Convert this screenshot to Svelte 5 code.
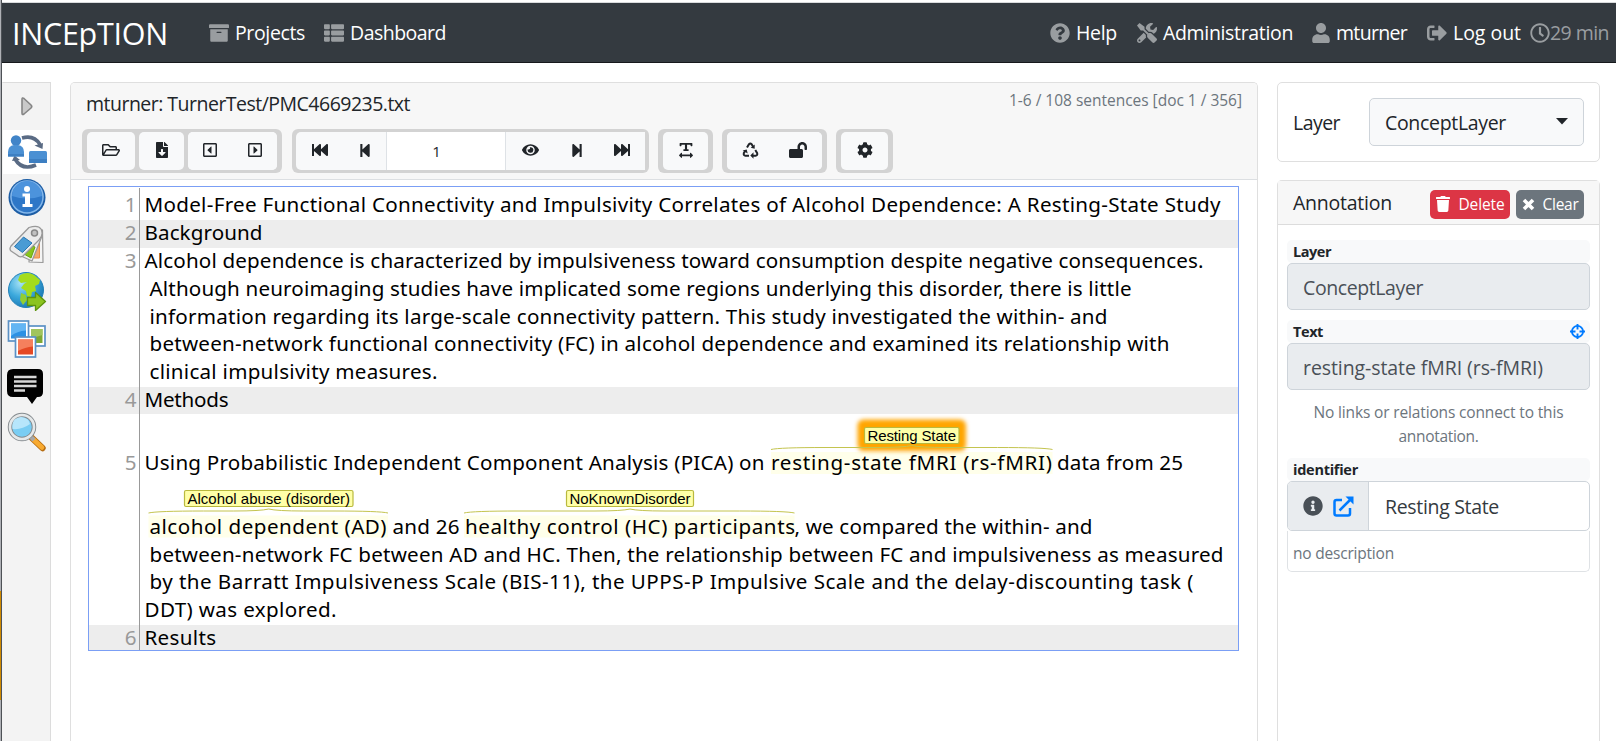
<script>
  const glyphs = {
    archive: { box: '0 0 512 512', d: 'M32 448c0 17.7 14.3 32 32 32h384c17.7 0 32-14.3 32-32V160H32v288zm160-212c0-6.600 5.400-12 12-12h104c6.600 0 12 5.400 12 12v8c0 6.600-5.400 12-12 12H204c-6.600 0-12-5.400-12-12v-8zM480 32H32C14.300 32 0 46.300 0 64v48c0 8.800 7.200 16 16 16h480c8.800 0 16-7.200 16-16V64c0-17.700-14.300-32-32-32z' },
    list: { box: '0 0 512 512', d: 'M149.333 216v80c0 13.255-10.745 24-24 24H24c-13.255 0-24-10.745-24-24v-80c0-13.255 10.745-24 24-24h101.333c13.255 0 24 10.745 24 24zM0 376v80c0 13.255 10.745 24 24 24h101.333c13.255 0 24-10.745 24-24v-80c0-13.255-10.745-24-24-24H24c-13.255 0-24 10.745-24 24zM125.333 32H24C10.745 32 0 42.745 0 56v80c0 13.255 10.745 24 24 24h101.333c13.255 0 24-10.745 24-24V56c0-13.255-10.745-24-24-24zm80 448H488c13.255 0 24-10.745 24-24v-80c0-13.255-10.745-24-24-24H205.333c-13.255 0-24 10.745-24 24v80c0 13.255 10.745 24 24 24zm-24-424v80c0 13.255 10.745 24 24 24H488c13.255 0 24-10.745 24-24V56c0-13.255-10.745-24-24-24H205.333c-13.255 0-24 10.745-24 24zm24 264H488c13.255 0 24-10.745 24-24v-80c0-13.255-10.745-24-24-24H205.333c-13.255 0-24 10.745-24 24v80c0 13.255 10.745 24 24 24z' },
    help: { box: '0 0 512 512', d: 'M504 256c0 136.997-111.043 248-248 248S8 392.997 8 256C8 119.083 119.043 8 256 8s248 111.083 248 248zM262.655 90c-54.497 0-89.255 22.957-116.549 63.758-3.536 5.286-2.353 12.415 2.715 16.258l34.699 26.310c5.205 3.947 12.621 3.008 16.665-2.122 17.864-22.658 30.113-35.797 57.303-35.797 20.429 0 45.698 13.148 45.698 32.958 0 14.976-12.363 22.667-32.534 33.976C247.128 238.528 216 254.941 216 296v4c0 6.627 5.373 12 12 12h56c6.627 0 12-5.373 12-12v-1.333c0-28.462 83.186-29.647 83.186-106.667 0-58.002-60.165-102-116.531-102zM256 338c-25.365 0-46 20.635-46 46 0 25.364 20.635 46 46 46s46-20.636 46-46c0-25.365-20.635-46-46-46z' },
    tools: { box: '0 0 512 512', d: 'M501.1 395.7L384 278.6c-23.1-23.1-57.6-27.6-85.4-13.9L192 158.1V96L64 0 0 64l96 128h62.1l106.6 106.6c-13.6 27.8-9.2 62.3 13.9 85.4l117.1 117.1c14.6 14.6 38.2 14.6 52.7 0l52.7-52.7c14.5-14.6 14.5-38.2 0-52.7zM331.700 225c28.3 0 54.9 11 74.9 31l19.4 19.400c15.8-6.900 30.8-16.500 43.8-29.500 37.100-37.100 49.700-89.300 37.900-136.700-2.200-9-13.500-12.100-20.100-5.500l-74.400 74.400-67.900-11.300L334 98.900l74.400-74.400c6.600-6.600 3.400-17.900-5.700-20.200-47.400-11.700-99.600.9-136.600 37.900-28.500 28.500-41.900 66.100-41.200 103.600l82.100 82.100c8.100-1.900 16.500-2.900 24.700-2.900zm-103.900 82l-56.700-56.700L18.700 402.800c-25 25-25 65.500 0 90.500s65.500 25 90.500 0l123.600-123.600c-7.600-19.900-9.900-41.600-5-62.700zM64 472c-13.200 0-24-10.800-24-24 0-13.300 10.700-24 24-24s24 10.700 24 24c0 13.200-10.700 24-24 24z' },
    user: { box: '0 0 448 512', d: 'M224 256c70.700 0 128-57.300 128-128S294.700 0 224 0 96 57.300 96 128s57.300 128 128 128zm89.600 32h-16.700c-22.200 10.200-46.900 16-72.900 16s-50.600-5.800-72.900-16h-16.700C60.200 288 0 348.200 0 422.400V464c0 26.500 21.500 48 48 48h352c26.500 0 48-21.500 48-48v-41.600c0-74.200-60.200-134.400-134.400-134.400z' },
    logout: { box: '0 0 512 512', d: 'M497 273L329 441c-15 15-41 4.500-41-17v-96H152c-13.300 0-24-10.700-24-24v-96c0-13.300 10.700-24 24-24h136V88c0-21.400 25.900-32 41-17l168 168c9.300 9.400 9.300 24.600 0 34zM192 436v-40c0-6.600-5.400-12-12-12H96c-17.700 0-32-14.300-32-32V160c0-17.700 14.300-32 32-32h84c6.600 0 12-5.400 12-12V76c0-6.600-5.400-12-12-12H96c-53 0-96 43-96 96v192c0 53 43 96 96 96h84c6.600 0 12-5.400 12-12z' },
    clock: { box: '0 0 512 512', d: 'M256 8C119 8 8 119 8 256s111 248 248 248 248-111 248-248S393 8 256 8zm0 448c-110.500 0-200-89.500-200-200S145.500 56 256 56s200 89.500 200 200-89.500 200-200 200zm61.800-104.400l-84.900-61.700c-3.100-2.300-4.900-5.900-4.900-9.700V116c0-6.600 5.400-12 12-12h32c6.600 0 12 5.400 12 12v141.700l66.800 48.600c5.400 3.900 6.500 11.400 2.600 16.800L334.600 349c-3.900 5.300-11.400 6.500-16.800 2.600z' },
    folder: { box: '0 0 576 512', d: 'M527.9 224H480v-48c0-26.500-21.500-48-48-48H272l-64-64H48C21.500 64 0 85.500 0 112v288c0 26.500 21.500 48 48 48h400c16.500 0 31.900-8.500 40.700-22.600l79.900-128c20-31.900-3-73.400-40.700-73.400zM48 118c0-3.300 2.700-6 6-6h134.100l64 64H426c3.300 0 6 2.700 6 6v42H152c-16.800 0-32.400 8.800-41.100 23.200L48 351.400zm400 282H72l77.200-128H528z' },
    file: { box: '0 0 384 512', d: 'M224 136V0H24C10.700 0 0 10.700 0 24v464c0 13.300 10.700 24 24 24h336c13.300 0 24-10.700 24-24V160H248c-13.200 0-24-10.800-24-24zm76.450 211.360l-96.420 95.700c-6.650 6.610-17.390 6.610-24.040 0l-96.420-95.700C73.420 337.290 80.540 320 94.820 320H160v-80c0-8.840 7.160-16 16-16h32c8.840 0 16 7.160 16 16v80h65.180c14.280 0 21.400 17.290 11.270 27.360zM377 105L279.100 7c-4.500-4.500-10.600-7-17-7H256v128h128v-6.100c0-6.300-2.500-12.400-7-16.900z' },
    caretLeft: { box: '0 0 448 512', d: 'M400 32H48C21.500 32 0 53.500 0 80v352c0 26.500 21.500 48 48 48h352c26.500 0 48-21.500 48-48V80c0-26.500-21.500-48-48-48zM400 432H48V80h352zM272 150v212c0 8-9 12-15 7L148 268c-7-7-7-17 0-24l109-101c6-5 15-1 15 7z' },
    caretRight: { box: '0 0 448 512', d: 'M400 32H48C21.500 32 0 53.500 0 80v352c0 26.500 21.500 48 48 48h352c26.500 0 48-21.500 48-48V80c0-26.500-21.500-48-48-48zM400 432H48V80h352zM176 150v212c0 8 9 12 15 7l109-101c7-7 7-17 0-24L191 143c-6-5-15-1-15 7z' },
    first: { box: '0 0 512 512', d: 'M0 436V76c0-7 5-12 12-12h40c7 0 12 5 12 12v152L236 72c20-17 52-3 52 24v132L460 72c20-17 52-3 52 24v320c0 27-32 41-52 25L288 285v131c0 27-32 41-52 25L64 285v151c0 7-5 12-12 12H12c-7 0-12-5-12-12z' },
    prev: { box: '0 0 448 512', d: 'M64 468V44c0-7 5-12 12-12h48c7 0 12 5 12 12v176L331 40c20-17 53-2 53 25v382c0 27-33 41-53 24L136 292v176c0 7-5 12-12 12H76c-7 0-12-5-12-12z' },
    eye: { box: '0 0 576 512', d: 'M572.520 241.400C518.290 135.590 410.930 64 288 64S57.680 135.640 3.480 241.410a32.350 32.350 0 0 0 0 29.190C57.710 376.410 165.070 448 288 448s230.320-71.640 284.520-177.410a32.350 32.350 0 0 0 0-29.190zM288 400a144 144 0 1 1 144-144 143.930 143.930 0 0 1-144 144zm0-240a95.310 95.310 0 0 0-25.310 3.790 47.850 47.850 0 0 1-66.900 66.900A95.780 95.780 0 1 0 288 160z' },
    width: { box: '0 0 448 512', d: 'M36 30h376c9 0 16 7 16 16v72c0 9-7 16-16 16h-26c-9 0-16-7-16-16V86H258v142h36c9 0 16 7 16 16v24c0 9-7 16-16 16H154c-9 0-16-7-16-16v-24c0-9 7-16 16-16h36V86H78v32c0 9-7 16-16 16H36c-9 0-16-7-16-16V46c0-9 7-16 16-16zM96 356v44h256v-44c0-14 14-20 24-12l66 70c8 8 8 16 0 24l-66 68c-10 8-24 2-24-12v-40H96v40c0 14-14 20-24 12L6 438c-8-8-8-16 0-24l66-70c10-8 24-2 24 12z' },
    unlock: { box: '0 0 576 512', d: 'M423.500 0C339.500.3 272 69.500 272 153.500V224H48c-26.500 0-48 21.500-48 48v192c0 26.500 21.500 48 48 48h352c26.500 0 48-21.500 48-48V272c0-26.500-21.500-48-48-48h-48v-71.100c0-39.600 31.700-72.500 71.300-72.900 40-.4 72.700 32.100 72.700 72v80c0 13.300 10.700 24 24 24h32c13.300 0 24-10.700 24-24v-80C576 68 507.500-.3 423.500 0z' },
    cog: { box: '0 0 512 512', d: 'M487.400 315.700l-42.600-24.600c4.300-23.200 4.300-47 0-70.200l42.600-24.600c4.900-2.800 7.100-8.600 5.500-14-11.100-35.600-30-67.800-54.700-94.600-3.800-4.100-10-5.100-14.800-2.300L380.800 110c-17.900-15.400-38.500-27.300-60.800-35.100V25.800c0-5.600-3.900-10.500-9.400-11.700-36.700-8.200-74.300-7.800-109.200 0-5.500 1.200-9.400 6.100-9.400 11.700V75c-22.200 7.900-42.800 19.800-60.800 35.100L88.700 85.500c-4.900-2.800-11-1.900-14.800 2.300-24.700 26.700-43.600 58.900-54.700 94.600-1.700 5.400.6 11.200 5.500 14L67.300 221c-4.300 23.200-4.300 47 0 70.200l-42.600 24.600c-4.900 2.800-7.100 8.600-5.500 14 11.100 35.600 30 67.800 54.700 94.600 3.800 4.100 10 5.100 14.800 2.300l42.600-24.600c17.900 15.400 38.500 27.300 60.800 35.100v49.200c0 5.600 3.900 10.500 9.400 11.700 36.700 8.200 74.300 7.800 109.200 0 5.500-1.200 9.400-6.100 9.400-11.700v-49.200c22.200-7.900 42.800-19.800 60.800-35.100l42.600 24.600c4.900 2.800 11 1.900 14.800-2.300 24.700-26.700 43.600-58.900 54.700-94.600 1.500-5.500-.7-11.300-5.600-14.100zM256 336c-44.100 0-80-35.900-80-80s35.900-80 80-80 80 35.900 80 80-35.900 80-80 80z' },
    trash: { box: '0 0 448 512', d: 'M432 32H312l-9.400-18.700A24 24 0 0 0 281.100 0H166.800a23.720 23.720 0 0 0-21.400 13.300L136 32H16A16 16 0 0 0 0 48v32a16 16 0 0 0 16 16h416a16 16 0 0 0 16-16V48a16 16 0 0 0-16-16zM53.200 467a48 48 0 0 0 47.900 45h245.800a48 48 0 0 0 47.900-45L416 128H32z' },
    info: { box: '0 0 512 512', d: 'M256 8C119.043 8 8 119.083 8 256c0 136.997 111.043 248 248 248s248-111.003 248-248C504 119.083 392.957 8 256 8zm0 110c23.196 0 42 18.804 42 42s-18.804 42-42 42-42-18.804-42-42 18.804-42 42-42zm56 254c0 6.627-5.373 12-12 12h-88c-6.627 0-12-5.373-12-12v-24c0-6.627 5.373-12 12-12h12v-64h-12c-6.627 0-12-5.373-12-12v-24c0-6.627 5.373-12 12-12h64c6.627 0 12 5.373 12 12v100h12c6.627 0 12 5.373 12 12v24z' }
  };

  // Spreads a label over its nominal width by adjusting the tracking.
  function fit(node, width) {
    const spacing = (width - node.getBoundingClientRect().width) / node.textContent.length;
    node.style.letterSpacing = `${spacing.toFixed(3)}px`;
  }

  const rows = [
    { y: 187, h: 33 }, { y: 220, h: 28, shade: true }, { y: 387, h: 27, shade: true }, { y: 625, h: 25, shade: true }
  ];
  const numbers = [['1', 212], ['2', 240], ['3', 268], ['4', 407], ['5', 470], ['6', 645]];
  const chunks = [
    [144.500, 212, 1076, 'Model-Free Functional Connectivity and Impulsivity Correlates of Alcohol Dependence: A Resting-State Study'],
    [144.500, 240, 118, 'Background'],
    [144.500, 268, 1059, 'Alcohol dependence is characterized by impulsiveness toward consumption despite negative consequences.'],
    [149.500, 296, 982, 'Although neuroimaging studies have implicated some regions underlying this disorder, there is little'],
    [149.500, 323.500, 958, 'information regarding its large-scale connectivity pattern. This study investigated the within- and'],
    [149.500, 351, 1020, 'between-network functional connectivity (FC) in alcohol dependence and examined its relationship with'],
    [149.500, 379, 288, 'clinical impulsivity measures.'],
    [144.500, 407, 84, 'Methods'],
    [144.500, 470, 620, 'Using Probabilistic Independent Component Analysis (PICA) on'],
    [771, 470, 281, 'resting-state fMRI (rs-fMRI)'],
    [1057, 470, 126, 'data from 25'],
    [149.500, 534, 237, 'alcohol dependent (AD)'],
    [392.500, 534, 67, 'and 26'],
    [465, 534, 330, 'healthy control (HC) participants'],
    [794.500, 534, 298, ', we compared the within- and'],
    [149.500, 562, 1074, 'between-network FC between AD and HC. Then, the relationship between FC and impulsiveness as measured'],
    [149.500, 589, 1044, 'by the Barratt Impulsiveness Scale (BIS-11), the UPPS-P Impulsive Scale and the delay-discounting task ('],
    [144.500, 617, 192, 'DDT) was explored.'],
    [144.500, 645, 71.500, 'Results']
  ];
  const spans = [
    { x: 771, w: 281.500, top: 452, lx: 864.500, lw: 94.500, ly: 427.500, label: 'Resting State', focus: true },
    { x: 148.500, w: 239.500, top: 515.500, lx: 184.500, lw: 168.500, ly: 490.500, label: 'Alcohol abuse (disorder)' },
    { x: 464, w: 330.500, top: 515.500, lx: 566.500, lw: 127, ly: 490.500, label: 'NoKnownDisorder' }
  ];
  function brace(s) {
    const y = s.top - 3.500, m = s.lx + s.lw / 2, r = s.x + s.w;
    return `M${s.x} ${y + 1} Q${s.x + 8} ${y - 1} ${s.x + 55} ${y - 1} H${m - 35} Q${m - 8} ${y - 1} ${m} ${y - 3} Q${m + 8} ${y - 1} ${m + 35} ${y - 1} H${r - 55} Q${r - 8} ${y - 1} ${r} ${y + 1}`;
  }
</script>

{#snippet icon(name, w, h, flip = false)}
  <svg class="glyph" class:flip width={w} height={h} viewBox={glyphs[name].box}><path fill-rule="evenodd" d={glyphs[name].d} /></svg>
{/snippet}

<div class="page">
  <div class="edge"><i></i></div>
  <div class="app">
    <nav>
      <span class="brand" use:fit={156}>INCEpTION</span>
      <a class="projects">{@render icon('archive', 20, 20)}<span use:fit={70}>Projects</span></a>
      <a class="dash">{@render icon('list', 20, 20)}<span use:fit={96}>Dashboard</span></a>
      <div class="right">
        <a class="n1">{@render icon('help', 20, 20)}<span use:fit={41}>Help</span></a>
        <a class="n2">{@render icon('tools', 20, 20)}<span use:fit={130}>Administration</span></a>
        <a class="n3">{@render icon('user', 18, 20)}<span use:fit={71}>mturner</span></a>
        <a class="n4">{@render icon('logout', 20, 20)}<span use:fit={68}>Log out</span></a>
        <a class="n5">{@render icon('clock', 20, 20)}<span use:fit={59}>29 min</span></a>
      </div>
    </nav>

    <div class="body">
      <aside>
        <div class="tab arrow">
          <svg width="14" height="21" viewBox="0 0 14 21"><path d="M2 3.500Q2 1 4 2.500L11 9Q12.500 10.500 11 12L4 18Q2 19.500 2 17z" fill="#c9c9c9" stroke="#858585" stroke-width="1.600" /></svg>
        </div>
        <div class="tab active">
          <svg width="40" height="36" viewBox="0 0 40 36">
            <g fill="none" stroke="#5a6b84" stroke-width="3.600"><path d="M15 4Q27 .5 33 10.500" /><path d="M29 31Q15 37 8 25" /></g>
            <path d="M27.500 11.500l8.500-2.500-.500 6zM5 27l2.500-5.500 5.500 4.500z" fill="#5a6b84" />
            <circle cx="9" cy="6.500" r="5.200" fill="#4184c8" />
            <path d="M1 22.500V18Q1 12 7 11h4q6 1 6 7v4.500z" fill="#4b90d3" /><rect x="22" y="17" width="18" height="12" rx="1.500" fill="#4b90d3" />
            <path d="M1 20h16v2.500H1zM22 25h18v4H22z" fill="#3d7fc2" />
          </svg>
        </div>
        <div class="tab">
          <svg class="up2" width="40" height="40" viewBox="0 0 40 40">
            <circle cx="20" cy="20.500" r="18.500" fill="#1c5da5" /><circle cx="20" cy="20" r="16.800" fill="#85b8eb" /><circle cx="20" cy="20" r="15.300" fill="#2e77c7" /><path d="M5 19a15 15 0 0 1 30 0Q20 24 5 19z" fill="#4c93dc" />
            <circle cx="20" cy="12" r="3" fill="#fff" /><path d="M15.500 16.500H23V27h2.500v3h-10v-3H18v-7.500h-2.500z" fill="#fff" />
          </svg>
        </div>
        <div class="tab">
          <svg class="up1" width="40" height="40" viewBox="0 0 40 40" stroke-linejoin="round">
            <path d="M24 4l11.500 1 .500 32.500-14-.500z" fill="#f4f4f4" stroke="#999" stroke-width="1.200" /><path d="M27 19l5.500-1v15h-6z" fill="#f3a66d" stroke="#ee8c45" />
            <path d="M26 2l9 3v6L25 36 14 31z" fill="#eee" stroke="#999" stroke-width="1.200" /><path d="M22 20l6 2-4 11-7-4z" fill="#87c51c" stroke="#68a50e" />
            <path d="M22 2.500Q31-.500 34 4q3 6-2 11L16 31Q13 33 10 30L4 26Q2 24 4 21z" fill="#ececec" stroke="#999" stroke-width="1.300" /><path d="M16.500 12l8.500 6-9.500 9.500-8-6z" fill="#4a9bd4" stroke="#2677b3" /><circle cx="27.500" cy="8" r="3" fill="#c1c1c1" stroke="#888" stroke-width="1.500" />
          </svg>
        </div>
        <div class="tab">
          <svg class="up2" width="40" height="40" viewBox="0 0 40 40">
            <defs><radialGradient id="sea" cx=".35" cy=".3" r=".8"><stop offset="0" stop-color="#a7e3f6" /><stop offset=".5" stop-color="#3ba8dc" /><stop offset="1" stop-color="#1670ad" /></radialGradient></defs>
            <circle cx="19" cy="19" r="17.500" fill="url(#sea)" stroke="#2281b9" />
            <path d="M13 4q8-4 14 0l6 5-1 4-4 2 1 5-4 1-1 5-4-1-1-5-5-3 3-4 3-2-6 1-3-3z" fill="#a4dc1c" /><path d="M14 22l5 2 1 5-4 5-3-5z" fill="#92ce30" />
            <path d="M20.500 26.500h8v-5l10 9-10 9v-5h-8z" fill="#8cc41f" stroke="#5d940c" stroke-width="1.300" stroke-linejoin="round" />
          </svg>
        </div>
        <div class="tab">
          <svg class="up1" width="40" height="40" viewBox="0 0 40 40">
            <g stroke="#5b91c5" stroke-width="1.700">
              <rect x="21" y="7" width="17" height="20" fill="#fff" /><path d="M24 10h11.500v14H24z" fill="#7ea833" stroke="none" /><path d="M24 10h11.500v6q-6 1-11.500 5z" fill="#a0c45d" stroke="none" />
              <rect x="1.500" y="2" width="20" height="20" fill="#fff" /><rect x="4" y="4.500" width="15" height="15" fill="#2c91e4" stroke="none" /><path d="M4 4.500h15v7Q10 12 4 17z" fill="#63b5f3" stroke="none" />
              <rect x="8.500" y="18" width="20" height="20" fill="#fff" /><rect x="11" y="20.500" width="15" height="15" fill="#e54924" stroke="none" /><path d="M11 20.500h15v7Q18 28 11 32z" fill="#f5805d" stroke="none" />
            </g>
          </svg>
        </div>
        <div class="tab">
          <svg width="40" height="40" viewBox="0 0 40 40">
            <path d="M6 2h25q5 0 5 5v18q0 5-5 5h-1l-5 7-5-7H6q-6 0-6-6V8q0-6 6-6z" fill="#000" /><path d="M7 10h22.500M7 14.500h22.500M7 19h22.500M7 23.500h11" stroke="#d6d6d6" stroke-width="2.600" />
          </svg>
        </div>
        <div class="tab">
          <svg class="up2" width="40" height="40" viewBox="0 0 40 40">
            <path d="M25 26l10.500 10" stroke="#b66d12" stroke-width="6.400" stroke-linecap="round" /><path d="M27 28l8 7.500" stroke="#f8aa30" stroke-width="4.600" stroke-linecap="round" /><path d="M22 23l5 5" stroke="#a8a8a8" stroke-width="4.500" />
            <circle cx="15" cy="15" r="12" fill="#79cdf3" stroke="#858b8f" stroke-width="4.500" /><circle cx="15" cy="15" r="12" fill="none" stroke="#e5e8e9" stroke-width="2.600" /><path d="M5.500 17Q4 6 14 5q8 1 9 7-8 6-17.500 5z" fill="#b7e6fb" />
          </svg>
        </div>
      </aside>

      <main>
        <header>
          <div class="title">
            <span class="doc" use:fit={324}>mturner: TurnerTest/PMC4669235.txt</span>
            <span class="count" use:fit={233}>1-6 / 108 sentences [doc 1 / 356]</span>
          </div>
          <div class="toolbar">
            <div class="group g1">
              <button class="b48">{@render icon('folder', 18, 16)}</button>
              <button class="b44">{@render icon('file', 12, 16)}</button>
              <div class="joined"><button>{@render icon('caretLeft', 14, 16)}</button><button>{@render icon('caretRight', 14, 16)}</button></div>
            </div>
            <div class="group g2">
              <button class="c1">{@render icon('first', 16, 16)}</button>
              <button class="c2">{@render icon('prev', 14, 15)}</button>
              <div class="pageno">1</div>
              <button class="c3">{@render icon('eye', 17, 16)}</button>
              <button class="c4">{@render icon('prev', 14, 15, true)}</button>
              <button class="c5">{@render icon('first', 16, 16, true)}</button>
            </div>
            <div class="group g3"><button>{@render icon('width', 14, 16)}</button></div>
            <div class="group g4">
              <div class="joined">
                <button>
                  <svg width="17" height="17" viewBox="0 0 17 17" fill="none" stroke="#212529" stroke-width="2"><path d="M5 5.500L7 2.200Q8.300.8 9.600 2.200L11.300 5M13.300 8l1.900 3.200q.5 2.200-1.700 2.600H10M7 13.800H3.500q-2.200-.4-1.700-2.600L3.400 8.400" /><path d="M12.700 2.500v4.200L8.700 5.700zM11.500 10.300v6.400l-3.200-3.200zM.700 8.600l4-1.200 1 4z" fill="#212529" stroke="none" /></svg>
                </button>
                <button>{@render icon('unlock', 18, 16)}</button>
              </div>
            </div>
            <div class="group g5"><button>{@render icon('cog', 16, 16)}</button></div>
          </div>
        </header>

        <svg class="editor" width="1152" height="466" viewBox="88 186 1152 466">
          <defs><filter id="glow" x="-30%" y="-90%" width="160%" height="280%"><feGaussianBlur stdDeviation="2.200" /></filter></defs>
          <rect x="88.500" y="186.500" width="1150" height="464" fill="#fff" stroke="#7b9ff5" />
          {#each rows as r}
            {#if r.shade}<rect x="89" y={r.y} width="1149" height={r.h} fill="#ededed" />{/if}
          {/each}
          <path d="M139.500 188V650" stroke="#999" />
          {#each numbers as [n, y]}<text class="num" x="136.500" {y}>{n}</text>{/each}
          {#each spans as s}
            <rect x={s.x} y={s.top} width={s.w} height="22" fill="#ffffea" />
            {#if s.focus}<rect x={s.lx - 7} y={s.ly - 8} width={s.lw + 14} height="31.500" rx="6" fill="#ffa500" filter="url(#glow)" />{/if}
            <path d={brace(s)} fill="none" stroke="#c4c44f" />
            <rect x={s.lx} y={s.ly} width={s.lw} height="16" rx="1.500" fill="#ffffa8" stroke="#b9b93e" stroke-width="1.200" />
            <text class="tag" x={s.lx + 3} y={s.ly + 13} textLength={s.lw - 6}>{s.label}</text>
          {/each}
          {#each chunks as [x, y, w, t]}<text class="line" {x} {y} textLength={w}>{t}</text>{/each}
        </svg>
      </main>

      <section>
        <div class="card pick">
          <span use:fit={47}>Layer</span>
          <div class="select"><span use:fit={121}>ConceptLayer</span><svg width="12" height="7" viewBox="0 0 12 7"><path d="M0 0h12L6 6.500z" fill="#212529" /></svg></div>
        </div>
        <div class="card panel">
          <div class="head">
            <span class="name" use:fit={99}>Annotation</span>
            <button class="danger">{@render icon('trash', 14, 16)}<span use:fit={46}>Delete</span></button>
            <button class="grey"><svg width="13" height="13" viewBox="0 0 13 13"><path d="M2 2l9 9M11 2l-9 9" stroke="#fff" stroke-width="3.600" /></svg><span use:fit={36}>Clear</span></button>
          </div>
          <div class="label first"><span use:fit={38}>Layer</span></div>
          <div class="input"><span use:fit={120}>ConceptLayer</span></div>
          <div class="label second"><span use:fit={30}>Text</span>
            <svg width="15" height="15" viewBox="0 0 15 15" fill="none" stroke="#007bff"><circle cx="7.500" cy="7.500" r="5.600" stroke-width="1.800" /><path d="M7.500 0v5.500M7.500 9.500V15M0 7.500h5.500M9.500 7.500H15" stroke-width="1.900" /></svg>
          </div>
          <div class="input"><span use:fit={240}>resting-state fMRI (rs-fMRI)</span></div>
          <p><span use:fit={250}>No links or relations connect to this</span><br /><span use:fit={80}>annotation.</span></p>
          <div class="label"><span use:fit={65}>identifier</span></div>
          <div class="combo">
            <div class="pre">{@render icon('info', 20, 20)}
              <svg width="21" height="21" viewBox="0 0 21 21" fill="none" stroke="#007bff"><path d="M9 4H3.500Q1.500 4 1.500 6v11.500q0 2 2 2H15q2 0 2-2V12" stroke-width="2.500" /><path d="M6.500 14.500L17.500 3.500" stroke-width="2.500" /><path d="M12.500.5H20.500V8.500z" fill="#007bff" stroke="none" /></svg>
            </div>
            <div class="value"><span use:fit={114}>Resting State</span></div>
          </div>
          <div class="desc"><span use:fit={101}>no description</span></div>
        </div>
      </section>
    </div>
  </div>
</div>

<style>
  :global(body) { margin: 0; overflow: hidden; background: #fff; }
  .page { display: flex; width: 1616px; height: 741px; overflow: hidden; box-sizing: border-box; font-family: 'Open Sans', 'Noto Sans', sans-serif; font-size: 19.500px; color: #212529; }
  .page * { box-sizing: border-box; }
  .page span { white-space: nowrap; display: inline-block; }
  .edge { width: 2px; flex: none; background: #aeb0b5; border-right: 1px solid #4d5156; padding-top: 591px; }
  .edge i { display: block; width: 1px; height: 109px; background: #d08a00; }
  .app { flex: 1; display: flex; flex-direction: column; min-width: 0; }
  nav { height: 61px; flex: none; margin-top: 2px; background: #343a40; border-top: 1px solid #d9dbdd; border-bottom: 1px solid #16191c; display: flex; align-items: center; color: #fff; padding-left: 10px; }
  nav a { display: flex; align-items: center; gap: 6px; height: 30px; line-height: 30px; }
  nav a :global(.glyph) { fill: #999da0; flex: none; }
  .brand { font-size: 30.500px; line-height: 40px; padding-top: 1px; }
  .projects { margin-left: 41px; }
  .dash { margin-left: 19px; }
  .right { margin-left: auto; display: flex; padding-right: 7px; }
  .n2, .n3, .n4 { margin-left: 20px; }
  .n3 { margin-left: 19px; }
  nav .n5 { margin-left: 9px; gap: 0; color: #999da0; }
  .body { display: flex; flex: 1; padding-top: 19px; min-height: 0; }
  aside { width: 49px; flex: none; background: #f3f3f3; border: 1px solid #dcdcdc; border-bottom: 0; border-left-color: #f3f3f3; }
  .tab { height: 47px; display: flex; align-items: center; padding-left: 4px; }
  .tab.arrow { padding-left: 17px; }
  .tab.active { background: #fff; height: 44px; margin-bottom: 1px; }
  .up1 { margin-bottom: 2px; }
  .up2 { margin-bottom: 4px; }
  main { width: 1188px; flex: none; margin-left: 19px; border: 1px solid #dfdfdf; border-bottom: 0; border-radius: 5px 5px 0 0; }
  header { height: 97px; background: #f7f7f7; border-bottom: 1px solid #dcdfe2; border-radius: 4px 4px 0 0; }
  .title { display: flex; justify-content: space-between; padding: 6px 15px 0; height: 46px; }
  .doc { line-height: 30px; }
  .count { font-size: 15.500px; line-height: 23px; color: #6c757d; }
  .toolbar { display: flex; gap: 9px; padding-left: 11px; }
  .group { height: 44px; background: #d3d3d3; border-radius: 6px; padding: 3px 5px; display: flex; }
  button { display: flex; align-items: center; justify-content: center; border: 0; padding: 0; background: #f8f9fa; font: inherit; }
  .toolbar button { height: 38px; border-radius: 5px; padding-bottom: 2px; }
  .toolbar :global(.glyph) { fill: #212529; }
  :global(.flip) { transform: scaleX(-1); }
  .g1 { width: 200px; gap: 4px; margin-right: 1px; }
  .b48 { width: 48px; }
  .b44 { width: 45px; }
  .joined { flex: 1; display: flex; background: #f8f9fa; border-radius: 5px; }
  .joined button { flex: 1; }
  .g2 { width: 357px; padding: 3px 4px; }
  .toolbar .g2 button { border-radius: 0; }
  .toolbar .g2 .c1 { width: 48px; border-radius: 5px 0 0 5px; }
  .c2 { width: 42px; }
  .pageno { width: 120px; background: #fff; border: solid #dee2e6; border-width: 0 1px; padding-right: 19px; text-align: center; font-size: 15px; line-height: 38px; }
  .c3 { width: 49px; }
  .c4 { width: 44px; }
  .c5 { flex: 1; }
  .g3 { width: 55px; }
  .g4 { width: 105px; }
  .g5 { width: 57px; }
  .g3 button, .g5 button { flex: 1; }
  .editor { display: block; margin: 6px 0 0 17px; }
  .line, .num { font-family: 'Noto Sans', sans-serif; font-size: 20.600px; fill: #000; }
  .num { fill: #999; text-anchor: end; }
  .tag { font-family: 'Liberation Sans', Arial, sans-serif; font-size: 15px; fill: #000; }
  section { margin-left: 19px; width: 323px; flex: none; display: flex; flex-direction: column; }
  .card { border: 1px solid #dfdfdf; border-radius: 5px; }
  .pick { height: 80px; display: flex; align-items: center; justify-content: space-between; padding: 0 15px; }
  .pick > span { padding-top: 1px; }
  .select { width: 215px; height: 48px; background: #f8f9fa; border: 1px solid #ced4da; border-radius: 5px; display: flex; align-items: center; justify-content: space-between; padding: 1px 15px 0; }
  .select svg { margin-bottom: 3px; }
  .panel { margin-top: 18px; flex: 1; border-bottom: 0; border-radius: 5px 5px 0 0; padding: 0 9px; }
  .head { height: 44px; margin: 0 -9px; background: #f7f7f7; border-bottom: 1px solid #dcdcdc; padding: 0 15px; display: flex; align-items: center; }
  .name { margin-right: auto; line-height: 30px; }
  .head button { height: 29px; margin-top: 3px; border-radius: 5px; color: #fff; font-size: 15.500px; }
  .danger { width: 80px; background: #dc3545; gap: 9px; }
  .danger :global(.glyph) { fill: #fff; }
  .grey { width: 68px; background: #6c757d; gap: 8px; margin-left: 6px; }
  .label { height: 23px; background: #f8f9fa; border-radius: 5px; padding: 0 5px 0 6px; font-size: 14.500px; font-weight: 700; line-height: 23px; display: flex; justify-content: space-between; align-items: center; }
  .first { margin-top: 15px; }
  .second { margin-top: 10px; }
  .input { height: 47px; background: #e9ecef; border: 1px solid #ced4da; border-radius: 5px; padding: 2px 15px 0; line-height: 44px; color: #495057; }
  p { margin: 10px 0 9px; text-align: center; color: #6c757d; font-size: 15.500px; line-height: 24px; height: 49px; }
  .combo { height: 50px; border: 1px solid #ced4da; border-radius: 5px; display: flex; }
  .pre { width: 81px; background: #e9ecef; border-right: 1px solid #ced4da; border-radius: 4px 0 0 4px; display: flex; align-items: center; padding-left: 15px; gap: 10px; }
  .pre :global(.glyph) { fill: #495057; }
  .value { padding: 2px 16px 0; line-height: 46px; color: #343a40; }
  .desc { height: 41px; border: 1px solid #dfe2e5; border-top: 0; border-radius: 0 0 5px 5px; padding: 2px 5px; font-size: 15.500px; line-height: 40px; color: #6c757d; }
</style>
